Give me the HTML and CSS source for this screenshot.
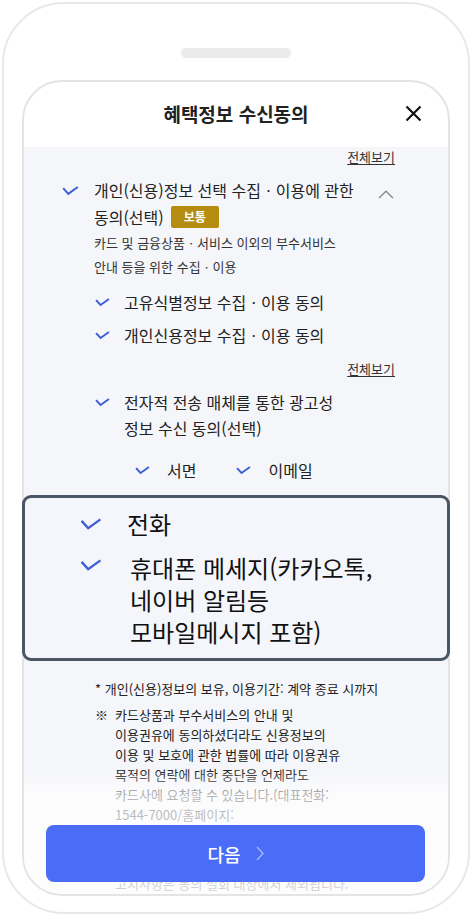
FILE: index.html
```html
<!DOCTYPE html>
<html lang="ko">
<head>
    <meta charset="UTF-8">
    <meta name="viewport" content="width=device-width, initial-scale=1.0">
    <title>혜택정보 수신동의</title>
    <link rel="stylesheet" href="styles.css">
</head>
<body>
    <div class="phone">
        <div class="notch"></div>
        <div class="screen">
            <header class="head">
                <h1 class="title">혜택정보 수신동의</h1>
                <button type="button" class="close" aria-label="닫기">
                    <svg width="17" height="17" viewBox="0 0 17 17"><path d="M1.5 1.5 L15.5 15.5 M15.5 1.5 L1.5 15.5" stroke="#111" stroke-width="2.2" fill="none"/></svg>
                </button>
            </header>
            <div class="body">
                <div class="more"><a href="#">전체보기</a></div>

                <div class="agree">
                    <span class="check"><svg width="17" height="10" viewBox="0 0 17 10"><path d="M1.2 2.2 L6.3 7.8 L15.8 1" stroke="#3f5ed8" stroke-width="2" fill="none"/></svg></span>
                    <div class="agree-text">
                        <p class="agree-title">개인(신용)정보 선택 수집ㆍ이용에 관한<br>동의(선택)<span class="badge">보통</span></p>
                        <p class="agree-desc">카드 및 금융상품ㆍ서비스 이외의 부수서비스<br>안내 등을 위한 수집ㆍ이용</p>
                    </div>
                    <span class="toggle"><svg width="16" height="9" viewBox="0 0 16 9"><path d="M1 8 L8 1.2 L15 8" stroke="#888" stroke-width="1.3" fill="none"/></svg></span>
                </div>

                <ul class="sub-list">
                    <li class="sub-item">
                        <span class="check"><svg width="15" height="9" viewBox="0 0 17 10"><path d="M1.2 2.2 L6.3 7.8 L15.8 1" stroke="#3f5ed8" stroke-width="2.2" fill="none"/></svg></span>
                        고유식별정보 수집ㆍ이용 동의
                    </li>
                    <li class="sub-item">
                        <span class="check"><svg width="15" height="9" viewBox="0 0 17 10"><path d="M1.2 2.2 L6.3 7.8 L15.8 1" stroke="#3f5ed8" stroke-width="2.2" fill="none"/></svg></span>
                        개인신용정보 수집ㆍ이용 동의
                    </li>
                </ul>

                <div class="more more-2"><a href="#">전체보기</a></div>

                <div class="sub-item sub-ad">
                    <span class="check"><svg width="15" height="9" viewBox="0 0 17 10"><path d="M1.2 2.2 L6.3 7.8 L15.8 1" stroke="#3f5ed8" stroke-width="2.2" fill="none"/></svg></span>
                    <span>전자적 전송 매체를 통한 광고성<br>정보 수신 동의(선택)</span>
                </div>

                <ul class="channel">
                    <li class="sub-item">
                        <span class="check"><svg width="15" height="9" viewBox="0 0 17 10"><path d="M1.2 2.2 L6.3 7.8 L15.8 1" stroke="#3f5ed8" stroke-width="2.2" fill="none"/></svg></span>
                        서면
                    </li>
                    <li class="sub-item">
                        <span class="check"><svg width="15" height="9" viewBox="0 0 17 10"><path d="M1.2 2.2 L6.3 7.8 L15.8 1" stroke="#3f5ed8" stroke-width="2.2" fill="none"/></svg></span>
                        이메일
                    </li>
                </ul>

                <ul class="focus-box">
                    <li>
                        <span class="check"><svg width="22" height="13" viewBox="0 0 17 10"><path d="M1.2 2.2 L6.3 7.8 L15.8 1" stroke="#3f5ed8" stroke-width="1.8" fill="none"/></svg></span>
                        <span>전화</span>
                    </li>
                    <li>
                        <span class="check check-up"><svg width="22" height="13" viewBox="0 0 17 10"><path d="M1.2 2.2 L6.3 7.8 L15.8 1" stroke="#3f5ed8" stroke-width="1.8" fill="none"/></svg></span>
                        <span class="focus-long">휴대폰 메세지(카카오톡,<br>네이버 알림등<br>모바일메시지 포함)</span>
                    </li>
                </ul>

                <div class="notice">
                    <p>* 개인(신용)정보의 보유, 이용기간: 계약 종료 시까지</p>
                    <div class="notice-mark">
                        <span class="mark">※</span>
                        <p>카드상품과 부수서비스의 안내 및<br>이용권유에 동의하셨더라도 신용정보의<br>이용 및 보호에 관한 법률에 따라 이용권유<br>목적의 연락에 대한 중단을 언제라도<br>카드사에 요청할 수 있습니다.(대표전화:<br>1544-7000/홈페이지:</p>
                    </div>
                    <p class="notice-last">고지사항은 동의 철회 대상에서 제외됩니다.</p>
                </div>

                <div class="fade"></div>
                <button type="button" class="next">
                    <span>다음</span>
                    <svg width="8" height="15" viewBox="0 0 8 15"><path d="M1 1 L7 7.5 L1 14" stroke="rgba(255,255,255,0.55)" stroke-width="1.2" fill="none"/></svg>
                </button>
            </div>
        </div>
    </div>
</body>
</html>
```

FILE: styles.css
```css
body{
    margin: 0;
    background: #fff;
    color: #222;
    font-family: "Noto Sans CJK KR", "Noto Sans", sans-serif;
}
ul{
    list-style: none;
    margin: 0;
    padding: 0;
}
p{
    margin: 0;
}

/* 바깥 프레임 */
.phone{
    box-sizing: border-box;
    width: 468px; height: 912px; margin: 2px;
    border: 2px solid #e8e8e8; border-radius: 62px;
    padding: 44px 18px 0;
}
.notch{
    width: 110px; height: 10px; margin: 0 auto 22px;
    background: #ebebeb; border-radius: 5px;
}
.screen{
    box-sizing: border-box;
    height: 816px;
    border: 2px solid #e4e4e4; border-radius: 40px;
    display: flex; flex-direction: column;
    background: #fff;
}

/* 헤더 */
.head{
    flex: none;
    height: 65px; padding-bottom: 2px; box-sizing: border-box;
    display: grid; grid-template-columns: 1fr auto 1fr; align-items: center;
}
.title{
    grid-column: 2;
    margin: 0;
    font-size: 19px; font-weight: 700; color: #222;
}
.close{
    grid-column: 3; justify-self: end;
    margin-right: 26px; padding: 0;
    border: 0; background: none;
    display: flex;
}

/* 본문 */
.body{
    flex: 1; min-height: 0;
    position: relative;
    background: #f5f6fa;
    border-radius: 0 0 38px 38px;
    overflow-x: visible; overflow-y: clip;
}
.more{
    text-align: right; padding-right: 53px;
    font-size: 13px; line-height: 20px;
}
.more a{
    color: #333; text-decoration: underline; text-underline-offset: 2px;
}
.more-2{
    margin-top: 11px;
}
.check{
    flex: none;
    display: flex; align-items: center;
}

.agree{
    display: flex;
    margin-top: 10px; padding: 0 54px 0 38px;
}
.agree .check{
    height: 27px; margin-right: 15px;
}
.agree-text{
    flex: 1;
}
.agree-title{
    font-size: 16px; line-height: 27px;
}
.badge{
    display: inline-block; vertical-align: top;
    height: 22px; line-height: 22px; margin: 2px 0 0 7px; padding: 0 13px;
    background: #b58c10; color: #fff; border-radius: 2px;
    font-size: 12px; font-weight: 700;
}
.agree-desc{
    font-size: 13px; line-height: 24px; color: #333;
}
.toggle{
    flex: none;
    height: 27px; display: flex; align-items: center; padding-top: 4px;
}

.sub-list{
    margin-top: 10px; padding-left: 71px;
}
.sub-item{
    display: flex;
    font-size: 16px; line-height: 26px;
}
.sub-list .sub-item + .sub-item{
    margin-top: 7px;
}
.sub-item .check{
    height: 26px; margin-right: 14px;
}
.sub-ad{
    margin-top: 10px; padding-left: 71px;
}
.channel{
    display: flex; gap: 40px;
    margin-top: 16px; padding-left: 111px;
}
.channel .sub-item{
    font-size: 16px;
}
.channel .check{
    margin-right: 17px;
}

/* 강조 박스 */
.focus-box{
    margin: 12px -2px 0; padding: 10px 0 10px 55px;
    border: 3px solid #4a5566; border-radius: 9px;
    background: #f4f6fb;
    font-size: 24px; line-height: 32px; color: #111;
}
.focus-box li{
    display: flex;
}
.focus-box li + li{
    margin-top: 12px;
}
.focus-box .check{
    height: 32px; margin-right: 25px;
}
.focus-box .check-up{
    height: 26px;
}
.focus-long{
    padding-left: 3px;
}

/* 안내문 */
.notice{
    margin-top: 18px; padding-left: 71px;
    font-size: 13px; line-height: 20px; color: #222;
}
.notice-mark{
    display: flex; margin-top: 6px;
}
.mark{
    width: 20px; flex: none;
}
.notice-last{
    margin-top: 49px; padding-left: 20px;
}
.fade{
    position: absolute; left: 0; right: 0; bottom: 0;
    height: 124px;
    background: linear-gradient(to bottom, rgba(255,255,255,0) 0, rgba(255,255,255,0.66) 24px, rgba(255,255,255,0.72) 60px, rgba(255,255,255,0.8) 100%);
    border-radius: 0 0 38px 38px;
    pointer-events: none;
}
.next{
    position: absolute; left: 22px; right: 23px; bottom: 12px;
    height: 57px;
    border: 0; border-radius: 8px;
    background: #4a6cf7; color: #fff;
    font-family: inherit; font-size: 18px; font-weight: 500;
    display: flex; align-items: center; justify-content: center; gap: 15px;
}
```
